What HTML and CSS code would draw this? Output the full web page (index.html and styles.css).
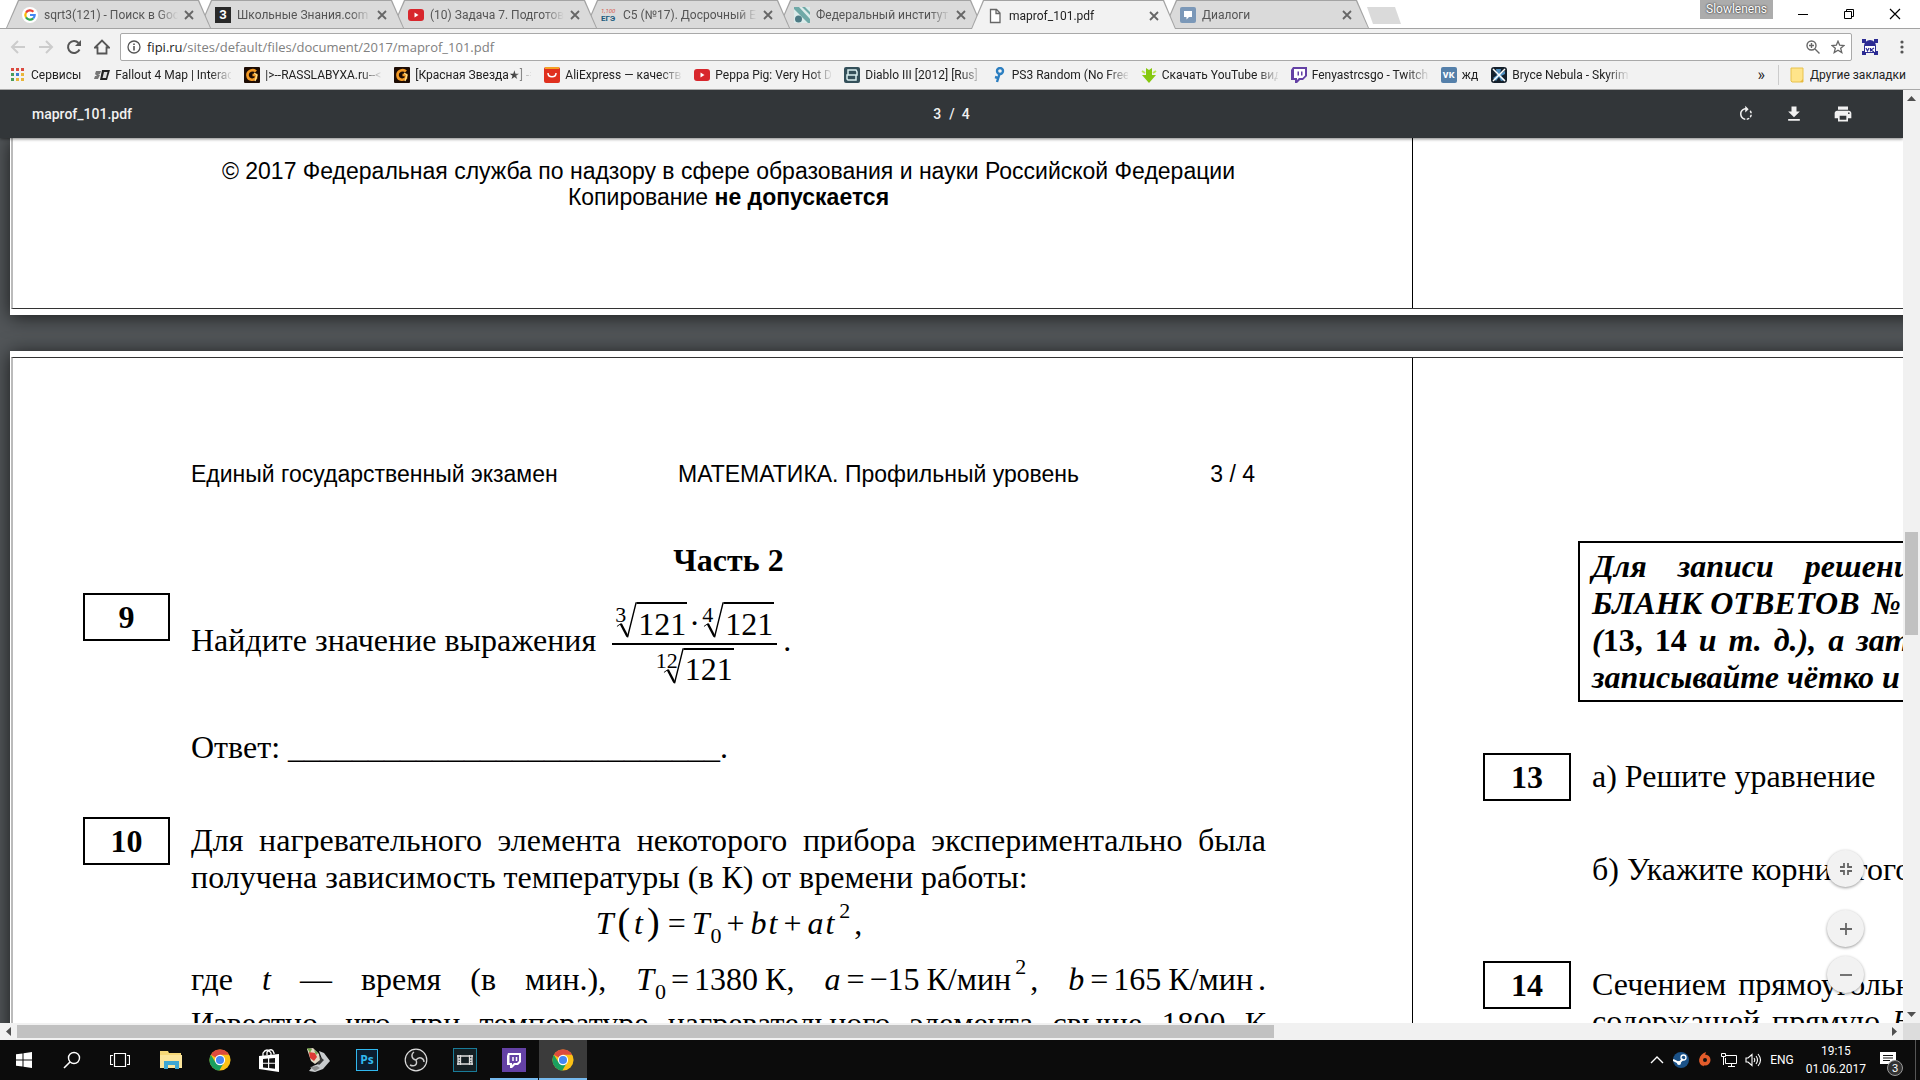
FILE: index.html
```
<!DOCTYPE html>
<html lang="ru">

<head>
    <meta charset="UTF-8">
    <meta name="viewport" content="width=device-width, initial-scale=1.0">
    <title>maprof_101.pdf</title>
    <link rel="stylesheet" href="styles.css">
</head>

<body>
    <!-- shared icons -->
    <svg class="defs" width="0" height="0">
        <symbol id="chrome" viewBox="0 0 24 24">
            <circle cx="12" cy="12" r="11.500" fill="#fbc116" />
            <path d="M12 12L2 6.300A11.500 11.500 0 0 1 22 6.300H12z" fill="#dd4b3e" />
            <path d="M2 6.300A11.500 11.500 0 0 0 11.300 23.500L16.500 14.500 12 12 7 14.500z" fill="#1aa05f" />
            <circle cx="12" cy="12" r="5.600" fill="#fff" />
            <circle cx="12" cy="12" r="4.400" fill="#4587f3" />
        </symbol>
        <symbol id="youtube" viewBox="0 0 16 16">
            <rect y="2" width="16" height="12" rx="3" fill="#d8272d" />
            <path d="M6.500 5.500v5l4-2.500z" fill="#fff" />
        </symbol>
        <symbol id="twitch" viewBox="0 0 16 16">
            <path d="M2 0h14v9l-4 4H9l-3 3H4v-3H0V3z" fill="#6441a5" />
            <path d="M3 2h11v6.500L11.500 11H8l-2 2v-2H3z" fill="#fff" />
            <path d="M6.500 4.500H8v4H6.500zM10 4.500h1.500v4H10z" fill="#6441a5" />
        </symbol>
        <symbol id="close" viewBox="0 0 10 10">
            <path d="M1 1l8 8M9 1L1 9" stroke="#666" stroke-width="1.800" />
        </symbol>
        <symbol id="gold" viewBox="0 0 16 16">
            <rect width="16" height="16" rx="1" fill="#1d0c04" />
            <path d="M12 4.500C9 1.500 3 4 3.500 8.500S9 14 12 11V8H8.500" fill="none" stroke="#f39a25" stroke-width="2.600" />
            <path d="M10 6l3 2-2 6" fill="none" stroke="#ffdf8a" stroke-width="1.300" />
        </symbol>
        <symbol id="root" viewBox="0 0 22 42" preserveAspectRatio="none">
            <path d="M1 27l4-3" fill="none" stroke="#000" />
            <path d="M5 24l7 14" fill="none" stroke="#000" stroke-width="2.500" />
            <path d="M12 39L21 1h2" fill="none" stroke="#000" stroke-width="1.500" />
        </symbol>
    </svg>

    <header class="browser">
        <div class="tabstrip">
            <a class="tab" href="#"><svg class="fav" viewBox="0 0 16 16"><circle cx="8" cy="8" r="8" fill="#fff" /><g fill="none" stroke-width="2.200"><path d="M4 5.600A4.700 4.700 0 0 1 11.400 4.700" stroke="#ea4335" /><path d="M4 10.400a4.700 4.700 0 0 1 0-4.800" stroke="#fbbc05" /><path d="M11.200 11.400A4.700 4.700 0 0 1 4 10.400" stroke="#34a853" /><path d="M8 8h4.700a4.700 4.700 0 0 1-1.500 3.400" stroke="#4285f4" /></g></svg><span class="tab-text">sqrt3(121) - Поиск в Google</span><svg class="x"><use href="#close" /></svg></a>
            <a class="tab" href="#"><span class="fav fav-z">З</span><span class="tab-text">Школьные Знания.com -</span><svg class="x"><use href="#close" /></svg></a>
            <a class="tab" href="#"><svg class="fav"><use href="#youtube" /></svg><span class="tab-text">(10) Задача 7. Подготовка</span><svg class="x"><use href="#close" /></svg></a>
            <a class="tab" href="#"><span class="fav fav-ege"><i>1,100</i><b>ЕГЭ</b></span><span class="tab-text">C5 (№17). Досрочный ЕГЭ</span><svg class="x"><use href="#close" /></svg></a>
            <a class="tab" href="#"><svg class="fav" viewBox="0 0 16 16"><rect width="16" height="16" fill="#dcebea" /><path d="M0 0h5l11 12v4h-2L0 2zM8 0h3l5 5v3z" fill="#6fa9a7" /><circle cx="4.500" cy="12" r="3.500" fill="#4d7b85" /></svg><span class="tab-text">Федеральный институт п</span><svg class="x"><use href="#close" /></svg></a>
            <a class="tab active" href="#"><svg class="fav" viewBox="0 0 16 16"><path d="M3.500 1.500h6l3.500 3.500v9.500H3.500zM9 1.500v4h4" fill="#fff" stroke="#666" stroke-width="1.300" /></svg><span class="tab-text">maprof_101.pdf</span><svg class="x"><use href="#close" /></svg></a>
            <a class="tab" href="#"><svg class="fav" viewBox="0 0 16 16"><rect width="16" height="16" rx="2" fill="#7b98b8" /><path d="M4 4h8v6H9l-2.500 2.500V10H4z" fill="#fff" /></svg><span class="tab-text">Диалоги</span><svg class="x"><use href="#close" /></svg></a>
            <button class="new-tab" aria-label="Новая вкладка"></button>
            <div class="window-controls">
                <span class="profile">Slowlenens</span>
                <button aria-label="Свернуть"><svg width="12" height="12"><path d="M1 6.500h10" stroke="#000" /></svg></button>
                <button aria-label="Развернуть"><svg width="12" height="12"><path d="M1.500 3.500h7v7h-7zM3.500 3.500v-2h7v7h-2" fill="none" stroke="#000" /></svg></button>
                <button aria-label="Закрыть"><svg width="12" height="12"><path d="M1 1l10 10M11 1L1 11" stroke="#000" stroke-width="1.200" /></svg></button>
            </div>
        </div>

        <div class="toolbar">
            <button aria-label="Назад"><svg width="16" height="16"><path d="M15 8H2M8 2L2 8l6 6" fill="none" stroke="#ccc" stroke-width="2" /></svg></button>
            <button aria-label="Вперёд"><svg width="16" height="16"><path d="M1 8h13M8 2l6 6-6 6" fill="none" stroke="#ccc" stroke-width="2" /></svg></button>
            <button aria-label="Обновить"><svg width="16" height="16"><path d="M13.500 10.500A6 6 0 1 1 12.500 4" fill="none" stroke="#555" stroke-width="2" /><path d="M15 1v6H9z" fill="#555" /></svg></button>
            <button aria-label="Домой"><svg width="16" height="16"><path d="M1 8.500L8 1.500l7 7h-2.500v6h-9v-6z" fill="none" stroke="#555" stroke-width="1.800" /></svg></button>
            <div class="address">
                <svg width="14" height="14"><circle cx="7" cy="7" r="6" fill="none" stroke="#555" stroke-width="1.300" /><path d="M7 6v4.500M7 3.500v1.500" stroke="#555" stroke-width="1.600" /></svg>
                <a class="url" href="#"><span>fipi.ru</span>/sites/default/files/document/2017/maprof_101.pdf</a>
                <svg width="14" height="14"><circle cx="5.500" cy="5.500" r="4.500" fill="none" stroke="#666" stroke-width="1.400" /><path d="M9 9l4.500 4.500M3 5.500h5M5.500 3v5" stroke="#666" stroke-width="1.400" /></svg>
                <svg width="14" height="14"><path d="M7 1.200l1.700 4 4.300.3-3.300 2.800 1.100 4.300L7 10.300l-3.800 2.300 1.100-4.300L1 5.500l4.300-.3z" fill="none" stroke="#666" stroke-width="1.300" /></svg>
            </div>
            <svg width="16" height="16"><path d="M0 0h4v4H0zM12 0h4v4h-4zM0 12h4v4H0zM12 12h4v4h-4z" fill="#2c2b93" /><path d="M2 7a6 6 0 0 1 12 0v9h-2v-2H4v2H2z" fill="#2c2b93" /><path d="M3 7h10v6H3z" fill="#fff" /><path d="M4 9l1.500 3L7 9M8.500 9v3.500M12 9l-3 2 3 2" fill="none" stroke="#2c2b93" stroke-width="1.200" /></svg>
            <button class="menu" aria-label="Меню"><svg width="4" height="16"><circle cx="2" cy="3" r="1.600" fill="#555" /><circle cx="2" cy="8" r="1.600" fill="#555" /><circle cx="2" cy="13" r="1.600" fill="#555" /></svg></button>
        </div>

        <nav class="bookmarks">
            <a href="#"><svg viewBox="0 0 16 16"><path d="M1 1h3v3H1zM6 1h3v3H6zM11 1h3v3h-3z" fill="#db4a40" /><path d="M1 6h3v3H1zM1 11h3v3H1z" fill="#4a9d5b" /><path d="M6 6h3v3H6z" fill="#3d7dd0" /><path d="M11 6h3v3h-3zM6 11h3v3H6zM11 11h3v3h-3z" fill="#e9b63a" /></svg><span>Сервисы</span></a>
            <a href="#"><svg viewBox="0 0 16 16"><path d="M2 4h5L6 7H4l2 1-2 4H0l1-3h2L1 7z" fill="#777" /><path d="M8 3h8l-3 10H6z" fill="#222" /><path d="M10 5h3.500L12 11H8.500z" fill="#ddd" /></svg><span>Fallout 4 Map | Interactive</span></a>
            <a href="#"><svg><use href="#gold" /></svg><span>|&gt;--RASSLABYXA.ru--&lt;|</span></a>
            <a href="#"><svg><use href="#gold" /></svg><span>[Красная Звезда★] -=</span></a>
            <a href="#"><svg viewBox="0 0 16 16"><rect width="16" height="16" rx="2" fill="#e0301e" /><path d="M1 0h14v2H1z" fill="#f59f24" /><path d="M4 6c0 5 8 5 8 0" fill="none" stroke="#fff" stroke-width="1.500" /></svg><span>AliExpress — качествен</span></a>
            <a href="#"><svg><use href="#youtube" /></svg><span>Peppa Pig: Very Hot Day</span></a>
            <a href="#"><svg viewBox="0 0 16 16"><rect width="16" height="16" rx="2" fill="#34505a" /><path d="M4 3h8l1 2v3H4zM3 8h9v5H4l-1-1z" fill="none" stroke="#d9eef0" stroke-width="1.500" /></svg><span>Diablo III [2012] [Rus]</span></a>
            <a href="#"><svg viewBox="0 0 16 16"><circle cx="9" cy="4" r="3" fill="none" stroke="#2d7fc1" stroke-width="2.400" /><path d="M8.500 7L6 15M7 11l-3-1" stroke="#2d7fc1" stroke-width="2.400" /></svg><span>PS3 Random (No Free Roam)</span></a>
            <a href="#"><svg viewBox="0 0 16 16"><path d="M5 1l3 2 3-2v7h4l-7 8-7-8h4z" fill="#86c80f" /><path d="M1 4l3 2M15 4l-3 2" stroke="#b9e351" stroke-width="2" /></svg><span>Скачать YouTube видео</span></a>
            <a href="#"><svg><use href="#twitch" /></svg><span>Fenyastrcsgo - Twitch</span></a>
            <a href="#"><i class="vk">vк</i><span>жд</span></a>
            <a href="#"><svg viewBox="0 0 16 16"><rect width="16" height="16" rx="3" fill="#15202b" /><path d="M2 5l4 2.500L5 2h5L9 7l5-3v3l-4 2 4 4-4 1-2-4-3 4-3-3 4-3z" fill="#4f8fc0" /><path d="M2 2l12 12M14 2L2 14" stroke="#fff" stroke-width="1.500" /></svg><span>Bryce Nebula - Skyrim mod</span></a>
            <a class="more" href="#">»</a>
            <a class="other" href="#"><svg viewBox="0 0 16 16"><path d="M2 1h12v14H3l-1-1z" fill="#ffe48a" stroke="#e8c24c" /><path d="M11 15l3-3v3z" fill="#e8b93e" /></svg><span>Другие закладки</span></a>
        </nav>
    </header>

    <main class="viewer">
        <div class="viewer-main">
            <div class="pdf-bar">
                <h1>maprof_101.pdf</h1>
                <div class="pages"><input type="text" value="3" aria-label="Страница"><span>/ &nbsp;4</span></div>
                <div class="pdf-actions">
                    <button aria-label="Повернуть"><svg width="18" height="18" viewBox="0 0 24 24"><path d="M15.550 5.550L11 1v3.070C7.060 4.560 4 7.920 4 12s3.050 7.440 7 7.930v-2.020c-2.840-.48-5-2.940-5-5.910s2.160-5.430 5-5.910V10zM19.930 11c-.17-1.390-.72-2.730-1.620-3.890l-1.420 1.420c.54.75.88 1.600 1.020 2.470zM13 17.900v2.020c1.390-.17 2.740-.71 3.900-1.610l-1.440-1.440c-.75.54-1.590.89-2.460 1.030zm3.890-2.420l1.420 1.410c.9-1.160 1.450-2.500 1.620-3.890h-2.020c-.14.87-.48 1.720-1.020 2.480z" fill="#f1f1f1" /></svg></button>
                    <button aria-label="Скачать"><svg width="20" height="20" viewBox="0 0 24 24"><path d="M19 9h-4V3H9v6H5l7 7zM5 18v2h14v-2z" fill="#f1f1f1" /></svg></button>
                    <button aria-label="Печать"><svg width="20" height="20" viewBox="0 0 24 24"><path d="M19 8H5c-1.660 0-3 1.340-3 3v6h4v4h12v-4h4v-6c0-1.660-1.340-3-3-3zm-3 11H8v-5h8zm3-7a1 1 0 1 1 0-2 1 1 0 0 1 0 2zm-1-9H6v4h12z" fill="#f1f1f1" /></svg></button>
                </div>
            </div>

            <div class="canvas">
                <section class="sheet sheet-end">
                    <div class="frame">
                        <div class="col col-left">
                            <p class="copyright">© 2017 Федеральная служба по надзору в сфере образования и науки Российской Федерации<br>Копирование <b>не допускается</b></p>
                        </div>
                        <div class="col"></div>
                    </div>
                </section>

                <section class="sheet">
                    <div class="frame">
                        <div class="col col-left">
                            <div class="running">
                                <span>Единый государственный экзамен</span>
                                <span>МАТЕМАТИКА. Профильный уровень</span>
                                <span class="folio">3 / 4</span>
                            </div>
                            <h2>Часть 2</h2>

                            <article class="task">
                                <div class="num">9</div>
                                <div class="body">
                                    <div class="expr">
                                        <span class="expr-text">Найдите значение выражения</span>
                                        <span class="frac">
                                            <span class="row"><span class="root"><sup>3</sup><svg><use href="#root" /></svg><span>121</span></span><i class="dot">·</i><span class="root"><sup>4</sup><svg><use href="#root" /></svg><span>121</span></span></span>
                                            <span class="row den"><span class="root wide"><sup>12</sup><svg><use href="#root" /></svg><span>121</span></span></span>
                                        </span>
                                        <span class="expr-text">.</span>
                                    </div>
                                    <p class="answer">Ответ: ___________________________.</p>
                                </div>
                            </article>

                            <article class="task">
                                <div class="num">10</div>
                                <div class="body text">
                                    <p class="full">Для нагревательного элемента некоторого прибора экспериментально была</p>
                                    <p>получена зависимость температуры (в К) от времени работы:</p>
                                    <p class="formula"><i>T</i><span class="par">(</span><i>t</i><span class="par">)</span><span class="op">=</span><i>T</i><sub>0</sub><span class="op">+</span><i>b</i><i>t</i><span class="op">+</span><i>a</i><i>t</i><sup>2</sup>,</p>
                                    <p class="full given">где <i>t</i> — время (в мин.), <span class="val"><i>T</i><sub>0</sub><span class="op">=</span>1380<span class="unit">К</span>,</span> <span class="val"><i>a</i><span class="op">=</span>−15<span class="unit">К/мин</span><sup>2</sup>,</span> <span class="val"><i>b</i><span class="op">=</span>165<span class="unit">К/мин</span><span class="stop">.</span></span></p>
                                    <p class="full">Известно, что при температуре нагревательного элемента свыше 1800 К</p>
                                </div>
                            </article>
                        </div>

                        <div class="col col-right">
                            <div class="note">
                                <p class="line loose"><span>Для</span><span>записи</span><span>решений</span></p>
                                <p class="line"><span>БЛАНК ОТВЕТОВ</span><span>№</span></p>
                                <p class="line"><span>(<em>13,</em></span><em>14</em><span>и</span><span>т.</span><span>д.),</span><span>а</span><span>затем</span></p>
                                <p class="line">записывайте чётко и</p>
                            </div>
                            <article class="task">
                                <div class="num">13</div>
                                <div class="body text">
                                    <p>а) Решите уравнение</p>
                                    <p class="part">б) Укажите корни этого</p>
                                </div>
                            </article>
                            <article class="task task-next">
                                <div class="num">14</div>
                                <div class="body text">
                                    <p class="line"><span>Сечением</span><span>прямоугольного</span></p>
                                    <p class="line"><span>содержащей</span><span>прямую</span><i>B</i></p>
                                </div>
                            </article>
                        </div>
                    </div>
                </section>
            </div>

            <div class="zoom">
                <button class="fit" aria-label="По размеру страницы"><svg width="14" height="14"><path d="M1 5h4V1M13 5H9V1M1 9h4v4M13 9H9v4" fill="none" stroke="#666" stroke-width="1.800" /></svg></button>
                <button aria-label="Увеличить"><svg width="14" height="14"><path d="M1 7h12M7 1v12" stroke="#666" stroke-width="1.800" /></svg></button>
                <button aria-label="Уменьшить"><svg width="14" height="14"><path d="M1 7h12" stroke="#666" stroke-width="1.800" /></svg></button>
            </div>
        </div>
        <div class="vscroll">
            <svg width="17" height="17"><path d="M4 11l4.500-5 4.500 5z" fill="#505050" /></svg>
            <div class="vtrack"><div class="vthumb"></div></div>
            <svg width="17" height="17"><path d="M4 6h9l-4.500 5z" fill="#505050" /></svg>
        </div>
        <div class="hscroll">
            <svg width="17" height="17"><path d="M11 4v9L6 8.500z" fill="#505050" /></svg>
            <div class="htrack"><div class="hthumb"></div></div>
            <svg width="17" height="17"><path d="M6 4l5 4.500L6 13z" fill="#505050" /></svg>
        </div>
        <div class="corner"></div>
    </main>

    <footer class="taskbar">
        <button aria-label="Пуск"><svg width="16" height="16"><path d="M0 2.300L6.500 1.400V7.500H0zM7.500 1.200L16 0v7.500H7.500zM0 8.500h6.500v6.100L0 13.700zM7.500 8.500H16V16l-8.500-1.200z" fill="#fff" /></svg></button>
        <button aria-label="Поиск"><svg width="18" height="18"><circle cx="11" cy="7" r="5.500" fill="none" stroke="#fff" stroke-width="1.400" /><path d="M7 11l-6 6" stroke="#fff" stroke-width="1.600" /></svg></button>
        <button aria-label="Представление задач"><svg width="20" height="16"><path d="M4.500 1.500h11v13h-11zM3 3.500H.5v9H3M17 3.500h2.500v9H17" fill="none" stroke="#fff" stroke-width="1.200" /></svg></button>
        <div class="apps">
            <button aria-label="Проводник"><svg width="22" height="20"><path d="M0 1h8l1 2h12v15H0z" fill="#f5d777" /><path d="M0 5h22v13H0z" fill="#fbe59b" /><path d="M4 11h15v8h-4v-4H8v4H4z" fill="#3ea7d3" /></svg></button>
            <button aria-label="Chrome"><svg width="22" height="22"><use href="#chrome" /></svg></button>
            <button aria-label="Магазин"><svg width="22" height="24"><path d="M1 8l20-2v18L1 21z" fill="#fff" /><path d="M5 8V5q4-6 8 0v2M9 7V4q5-5 7 1v1" fill="none" stroke="#fff" stroke-width="1.300" /><path d="M5 11l5-.5v4.200H5zM11.200 10.400l5.800-.5v4.800h-5.800zM5 15.800h5V20l-5-.5zM11.200 15.800H17v5l-5.800-.7z" fill="#111" /></svg></button>
            <button aria-label="Игра"><svg width="24" height="24"><path d="M13 3l5 2 6 8-7 8-8 3-6-1 4-5 8-3 1-4z" fill="#c9ccce" /><path d="M12 7l6 5-5 5-2-2 3-4z" fill="#3a3a3a" /><path d="M1 1l6-1 6 6 1 6-5 4-4-3z" fill="#e3d9c4" /><path d="M3 4l6 1 2 4-3 4-4-3z" fill="#de3b35" /><path d="M1 0l5 1-2 4zM8 2l4 3-2 2z" fill="#73a64a" /><path d="M4 19l7-1 3 2-5 3z" fill="#8d8d8d" /></svg></button>
            <button aria-label="Photoshop"><span class="ps">Ps</span></button>
            <button aria-label="OBS"><svg width="24" height="24"><circle cx="12" cy="12" r="10.800" fill="#181818" stroke="#ddd" stroke-width="1.200" /><path d="M12 12C7 11 7 6 10 4M12 12c2 5-2 7-6 5M12 12c3-4 8-2 8 2" fill="none" stroke="#ccc" stroke-width="1.400" /></svg></button>
            <button aria-label="Видео"><svg width="24" height="24"><rect x=".5" y=".5" width="23" height="23" fill="#141f23" stroke="#197c99" /><path d="M5 7v10M19 7v10M7.500 7v10M16.500 7v10M4 8h16M4 16h16M5 11h2M5 13.500h2M17 11h2M17 13.500h2" stroke="#ddd" stroke-width="1.300" /></svg></button>
            <button class="running-app" aria-label="Twitch"><svg width="24" height="24"><rect width="24" height="24" fill="#6441a5" /><path d="M6 5h13v9l-3 3h-3l-3 3H8v-3H5V8zM7.500 7v8H10v2l2-2h3l2-2V7z" fill="#fff" fill-rule="evenodd" /><path d="M11 9v4M14.500 9v4" stroke="#fff" stroke-width="1.500" /></svg></button>
            <button class="running-app current" aria-label="Chrome"><svg width="22" height="22"><use href="#chrome" /></svg></button>
        </div>
        <div class="tray">
            <svg width="16" height="16"><path d="M2 11l6-6 6 6" fill="none" stroke="#fff" stroke-width="1.400" /></svg>
            <svg width="16" height="16"><circle cx="8" cy="8" r="8" fill="#1b5288" /><path d="M0 8l6 3 4-4" fill="none" stroke="#fff" stroke-width="2" /><circle cx="10.500" cy="5.500" r="2.500" fill="none" stroke="#fff" stroke-width="1.300" /><circle cx="6" cy="11" r="2" fill="#fff" /></svg>
            <svg width="16" height="16"><path d="M9 0L8 3l-1 10-1 3 .5-2C0 13 1 2 9 0z" fill="#e35c2b" /><circle cx="8" cy="8" r="5.500" fill="#e35c2b" /><circle cx="8" cy="8" r="2" fill="#111" /></svg>
            <svg width="16" height="16"><path d="M5 3.500h10.500v8H4.500V6M7 14.500h7M10.500 12v2M.5 1.500h4v3h-4zM2.500 4.500V13" fill="none" stroke="#fff" /></svg>
            <svg width="17" height="16"><path d="M1 6h2l4-3.500v11L3 10H1zM9 6q1.500 2 0 4M11 4q3 4 0 8M13 2q5 6 0 12" fill="none" stroke="#fff" stroke-width="1.100" /></svg>
            <span class="lang">ENG</span>
            <time class="clock">19:15<br>01.06.2017</time>
            <button class="center" aria-label="Центр уведомлений"><svg width="16" height="16"><path d="M0 0h16v12h-4v4l-4-4H0z" fill="#fff" /><path d="M3 3.500h10M3 6h10M3 8.500h7" stroke="#111" /></svg><span class="badge">3</span></button>
        </div>
    </footer>
</body>

</html>
```
FILE: styles.css
```
* {
    box-sizing: border-box;
}

body {
    display: flex;
    flex-direction: column;
    height: 100vh;
    margin: 0;
    overflow: hidden;
    font-family: Roboto, "Open Sans", sans-serif;
    font-size: 12px;
    line-height: 16px;
    color: #222;
}

p, h1, h2 {
    margin: 0;
}

a {
    color: inherit;
    text-decoration: none;
}

button {
    display: flex;
    align-items: center;
    justify-content: center;
    flex: none;
    padding: 0;
    border: 0;
    background: none;
}

svg {
    flex: none;
}

.defs {
    position: absolute;
}

/* tabs */
.browser {
    background: #f2f2f2;
    border-bottom: 1px solid #a9a9a9;
}

.tabstrip {
    display: flex;
    height: 29px;
    padding-left: 6px;
    background: #fff;
    border-bottom: 1px solid #a3a3a3;
}

.tab {
    position: relative;
    display: flex;
    align-items: center;
    gap: 6px;
    width: 205px;
    height: 28px;
    margin-right: -12px;
    padding: 2px 17px 0 16px;
    color: #555;
    isolation: isolate;
}

.tab::before,
.tab::after {
    content: "";
    position: absolute;
    z-index: -1;
    inset: 0;
    background: #a3a3a3;
    clip-path: polygon(12px 0, calc(100% - 12px) 0, 100% 100%, 0 100%);
}

.tab::after {
    inset: 1px 1px 0;
    background: #dadada;
}

.tab:nth-child(1) { z-index: 7; }
.tab:nth-child(2) { z-index: 6; }
.tab:nth-child(3) { z-index: 5; }
.tab:nth-child(4) { z-index: 4; }
.tab:nth-child(5) { z-index: 3; }
.tab:nth-child(7) { z-index: 1; }

.tab.active {
    z-index: 9;
    height: 29px;
    color: #222;
}

.tab.active::after {
    background: #f2f2f2;
}

.fav {
    flex: none;
    width: 16px;
    height: 16px;
}

.fav-z {
    background: #292929;
    color: #fff;
    font-weight: bold;
    text-align: center;
}

.fav-ege {
    color: #d8574c;
    font-size: 6px;
    line-height: 8px;
}

.fav-ege b {
    display: block;
    color: #205a7d;
    font-size: 8px;
}

.tab-text {
    flex: 1;
    overflow: hidden;
    white-space: nowrap;
    mask-image: linear-gradient(to right, #000 85%, transparent);
}

.x {
    width: 10px;
    height: 10px;
}

.new-tab {
    width: 34px;
    height: 17px;
    margin: 7px 0 0 10px;
    background: #dadada;
    clip-path: polygon(0 0, 28px 0, 100% 100%, 6px 100%);
}

.window-controls {
    display: flex;
    align-items: center;
    margin-left: auto;
    padding-right: 2px;
}

.window-controls button {
    width: 46px;
    height: 28px;
}

.profile {
    align-self: flex-start;
    width: 73px;
    height: 19px;
    margin-right: 7px;
    background: #acacac;
    color: #fff;
    line-height: 18px;
    text-align: center;
    text-shadow: 0 0 2px #000;
}

/* address row */
.toolbar {
    display: flex;
    align-items: center;
    gap: 12px;
    height: 36px;
    padding: 0 16px 0 10px;
}

.address {
    display: flex;
    flex: 1;
    align-items: center;
    gap: 11px;
    height: 28px;
    margin: 0 -2px;
    padding: 0 6px;
    background: #fff;
    border: 1px solid #a9a9a9;
    border-radius: 2px;
}

.url {
    flex: 1;
    margin-left: -5px;
    color: #808080;
    font: 13px/18px "Open Sans", sans-serif;
}

.url span {
    color: #222;
}

.menu {
    margin-left: 10px;
}

.bookmarks {
    display: flex;
    align-items: center;
    gap: 13px;
    height: 24px;
    padding: 0 14px 4px 10px;
}

.bookmarks a {
    display: flex;
    align-items: center;
    gap: 5px;
    white-space: nowrap;
}

.bookmarks span {
    max-width: 116px;
    overflow: hidden;
    mask-image: linear-gradient(to right, #000 95px, transparent 118px);
}

.bookmarks svg {
    width: 16px;
    height: 16px;
}

.vk {
    width: 16px;
    height: 16px;
    border-radius: 2px;
    background: #5580aa;
    color: #fff;
    font: bold 10px/15px "Open Sans", sans-serif;
    text-align: center;
}

.bookmarks .more {
    margin-left: auto;
    font-size: 16px;
}

.bookmarks .other {
    height: 20px;
    padding-left: 10px;
    border-left: 1px solid #ccc;
}

.bookmarks .other span {
    mask-image: none;
}

/* pdf viewer */
.viewer {
    display: grid;
    flex: 1;
    grid-template-columns: minmax(0, 1fr) 17px;
    grid-template-rows: minmax(0, 1fr) 17px;
    min-height: 0;
    background: #f1f1f1;
}

.viewer-main {
    position: relative;
    display: flex;
    flex-direction: column;
    overflow: hidden;
    background: #525659;
}

.pdf-bar {
    z-index: 1;
    display: grid;
    grid-template-columns: 1fr auto 1fr;
    flex: none;
    align-items: center;
    height: 48px;
    padding: 0 50px 0 32px;
    background: #323639;
    box-shadow: 0 1px 3px rgba(0, 0, 0, .5);
    color: #f1f1f1;
    font: 500 14px Roboto, sans-serif;
}

.pdf-bar h1 {
    font: inherit;
}

.pages {
    display: flex;
    gap: 6px;
    margin-left: 18px;
}

.pages input {
    width: 10px;
    padding: 0;
    border: 0;
    background: none;
    color: inherit;
    font: inherit;
}

.pdf-actions {
    display: flex;
    gap: 29px;
    justify-content: flex-end;
}

.canvas {
    flex: 1;
    min-height: 0;
    padding-left: 10px;
}

.sheet {
    width: max-content;
    margin-bottom: 36px;
    padding: 6px 0 6px 1px;
    background: #fff;
    box-shadow: 0 2px 18px rgba(0, 0, 0, .7);
}

.sheet-end {
    padding-top: 0;
}

.frame {
    display: flex;
    border: 1px solid #333;
    border-left: 2px solid #bbb;
}

.sheet-end .frame {
    border-top: 0;
}

.col {
    width: 1400px;
    color: #000;
    font: 32px/37px "Liberation Serif", serif;
}

.col-left {
    padding: 0 146px 0 70px;
    border-right: 1px solid #000;
}

.copyright {
    height: 170px;
    padding: 20px 0 0 108px;
    font: 23px/26px "Liberation Sans", sans-serif;
    text-align: center;
    white-space: nowrap;
}

.running {
    display: grid;
    grid-template-columns: 487px 1fr auto;
    padding: 102px 11px 0 108px;
    font: 23px/28px "Liberation Sans", sans-serif;
}

.col h2 {
    margin-top: 54px;
    padding-left: 108px;
    font-size: 32px;
    text-align: center;
}

.task {
    display: grid;
    grid-template-columns: 87px 1fr;
    gap: 21px;
    align-items: start;
    margin-top: 51px;
}

.col-right .task {
    grid-template-columns: 88px 1fr;
}

h2 + .task {
    margin-top: 14px;
}

.num {
    height: 48px;
    border: 2px solid #000;
    font-weight: bold;
    line-height: 44px;
    text-align: center;
}

.text {
    padding-top: 5px;
    white-space: nowrap;
}

.full {
    text-align: justify;
    text-align-last: justify;
}

/* task 9 */
.expr {
    display: flex;
}

.expr-text {
    margin-top: 29px;
}

.frac {
    margin: 9px 6px 0 16px;
}

.row {
    display: flex;
    justify-content: center;
    height: 41px;
    padding: 0 3px;
}

.den {
    height: 45px;
    padding-top: 3px;
    border-top: 2px solid #000;
}

.root {
    display: flex;
    height: 40px;
}

.root sup {
    width: 1px;
    font-size: 22px;
    line-height: 26px;
}

.root.wide sup {
    width: 7px;
}

.root svg {
    width: 21px;
    height: 38px;
}

.root > span {
    padding: 0 1px;
    border-top: 2px solid #000;
    line-height: 40px;
}

.den .root > span {
    line-height: 38px;
}

.dot {
    width: 15px;
    font-style: normal;
    line-height: 42px;
    text-align: center;
}

.answer {
    margin-top: 41px;
}

/* formulas */
.text sub,
.text sup {
    font-size: 22px;
    line-height: 0;
    vertical-align: -9px;
}

.text sup {
    margin: 0 4px;
    vertical-align: 16px;
}

.formula {
    margin-top: 9px;
    text-align: center;
}

.formula i,
.val i {
    margin: 0 1px;
}

.par {
    margin: 0 3px;
    font-size: 38px;
    line-height: 0;
}

.op {
    margin: 0 5px;
}

.unit {
    margin-left: 7px;
}

.stop {
    margin-left: 5px;
}

.given {
    margin: 19px 0 7px;
}

.val {
    display: inline-block;
    text-align-last: left;
}

.note {
    margin: 183px 0 0 95px;
    padding: 5px 12px 4px;
    border: 2px solid #000;
    font-style: italic;
    font-weight: bold;
    white-space: nowrap;
}

.note em {
    font-style: normal;
}

.line {
    display: flex;
    gap: 12px;
}

.loose {
    gap: 31px;
}

.col-right {
    padding-left: 70px;
}

.part {
    margin-top: 56px;
}

.task-next {
    margin-top: 73px;
}

.zoom {
    position: absolute;
    right: 39px;
    bottom: 30px;
    display: grid;
    gap: 9px;
}

.zoom button {
    width: 37px;
    height: 37px;
    border-radius: 50%;
    background: #f2f2f2;
    box-shadow: 0 1px 3px rgba(0, 0, 0, .4);
}

.zoom .fit {
    margin-bottom: 14px;
}

.vscroll,
.hscroll {
    display: flex;
}

.vscroll {
    flex-direction: column;
}

.vtrack,
.htrack {
    flex: 1;
}

.vtrack {
    padding: 425px 2px 0;
}

.vthumb {
    height: 103px;
    background: #c1c1c1;
}

.htrack {
    padding: 2px 0;
}

.hthumb {
    width: calc(67% + 5px);
    height: 13px;
    background: #c1c1c1;
}

.corner {
    background: #dcdcdc;
}

/* taskbar */
.taskbar {
    display: flex;
    height: 40px;
    background: #0c0c0c;
    color: #fff;
}

.taskbar button {
    width: 48px;
    height: 40px;
}

.apps {
    display: flex;
    gap: 1px;
    margin-left: 3px;
}

.ps {
    width: 22px;
    height: 22px;
    border: 1px solid #31b8ee;
    background: #0b1d30;
    color: #31b8ee;
    font: bold 12px/19px "Open Sans", sans-serif;
}

.running-app {
    border-top: 2px solid transparent;
    border-bottom: 2px solid #76b9ed;
}

.current {
    border-top-color: #3b3b3b;
    background: #3b3b3b;
}

.tray {
    display: flex;
    align-items: center;
    gap: 8px;
    margin-left: auto;
    padding-right: 4px;
}

.clock {
    margin-left: 4px;
    line-height: 18px;
    text-align: center;
}

.tray .center {
    position: relative;
    width: 42px;
    padding-right: 14px;
    border-right: 1px solid #555;
}

.badge {
    position: absolute;
    right: 12px;
    bottom: 4px;
    width: 16px;
    height: 16px;
    border: 1px solid #999;
    border-radius: 50%;
    background: #333;
    color: #fff;
    font-size: 11px;
    line-height: 14px;
}
```
